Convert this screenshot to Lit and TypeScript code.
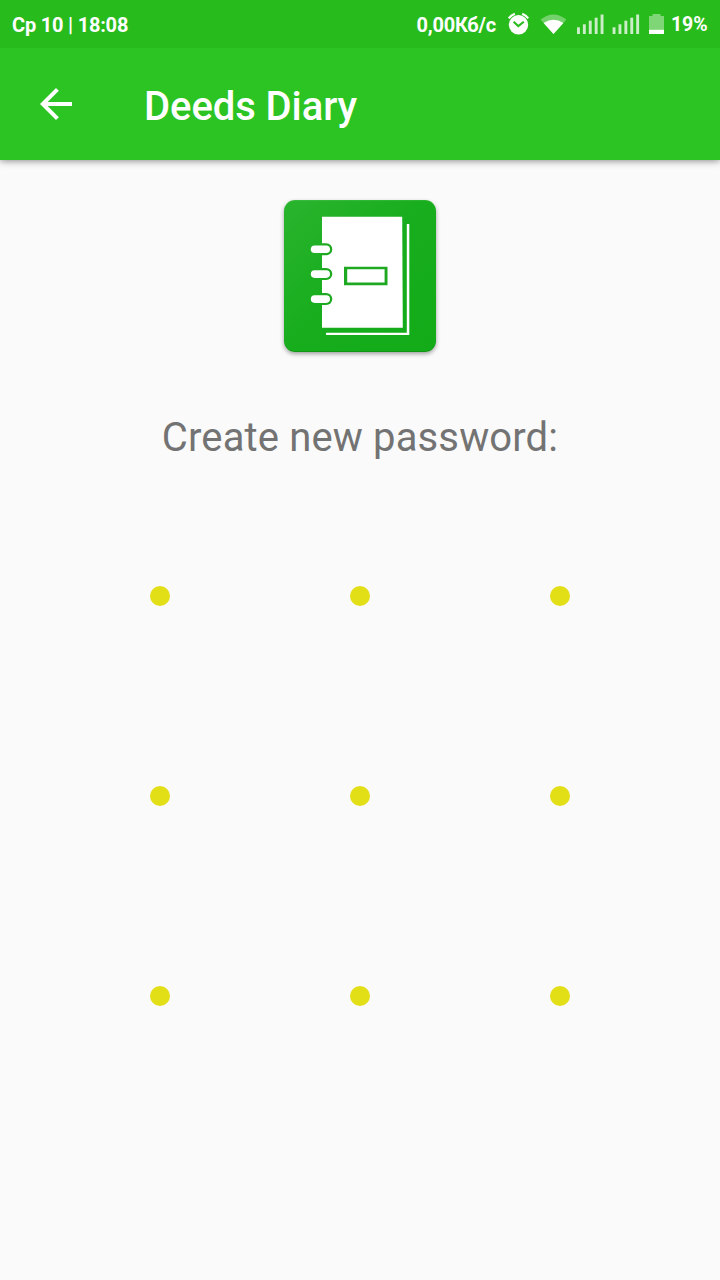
import { LitElement, html, css, svg } from "lit";
import { customElement } from "lit/decorators.js";

const green = "#1fa922";

@customElement("status-bar")
class StatusBar extends LitElement {
  static styles = css`
    :host {
      display: flex;
      align-items: center;
      height: 48px;
      box-sizing: border-box;
      padding-left: 12px;
      background: #28bb1c;
      color: #fff;
      font: 700 20px/24px Roboto, sans-serif;
      letter-spacing: -0.2px;
      white-space: pre;
    }
    .time { flex: 1; padding-top: 2px; }
    .speed { padding-top: 2px; }
    .level { width: 49px; padding-top: 2px; font-size: 19.5px; letter-spacing: -0.1px; }
    svg { display: block; flex: none; }
    .icons { display: flex; height: 48px; width: 175px; }
  `;

  bars(x: number) {
    return [27.3, 24.3, 20.7, 17.7, 14.5].map(
      (top, i) => svg`<rect x=${x + i * 5.9} y=${top} width="2.9" height=${34 - top} />`
    );
  }

  render() {
    return html`
      <span class="time">Ср 10 | 18:08</span>
      <span class="speed">0,00Кб/с</span>
      <span class="icons">
        <svg width="175" height="48" viewBox="496 0 175 48" fill="#fff">
          <circle cx="518.5" cy="24.8" r="9.7" />
          <path d="M508.8 18.4Q511 15.4 514.8 13.8M528.2 18.4Q526 15.4 522.2 13.8" fill="none" stroke="#fff" stroke-width="2.2" />
          <path d="M513.6 21.8l4.7 4.3 5.5-4.4" fill="none" stroke="#28bb1c" stroke-width="2" />
          <path d="M540.5 19.6Q553.5 9.3 566.4 19.6L553.5 34Z" opacity=".35" />
          <path d="M543.6 23Q553.5 16.4 563.4 23L553.5 34Z" />
          <g opacity=".76">${this.bars(577)}${this.bars(612.6)}</g>
          <path d="M649 16h3.5v-2h8v2h3.5v14h-15z" opacity=".4" />
          <rect x="649" y="29.8" width="15" height="4.2" />
        </svg>
      </span>
      <span class="level">19%</span>
    `;
  }
}

@customElement("diary-logo")
class DiaryLogo extends LitElement {
  static styles = css`
    :host {
      display: block;
      width: 152px;
      height: 152px;
      border-radius: 11px;
      background: linear-gradient(135deg, #2ab42e 0%, #17ad1d 50%, #13ab18 100%);
      box-shadow: 0 2px 4px rgba(0, 0, 0, 0.36), inset 0 -1px 0 rgba(0, 60, 0, 0.2),
        inset 0 1px 0 rgba(255, 255, 255, 0.08);
    }
    svg { display: block; }
  `;

  render() {
    return html`
      <svg width="152" height="152" viewBox="0 0 152 152" fill="#fff">
        <path d="M38 16.8H118.2L118.8 127.7H38Z" />
        <path d="M122.8 24h2.5v111H42v-2.3h80.8z" />
        ${[49.3, 74.1, 99.1].map(
          (y) => svg`
            <path d=${`M38 ${y - 6}h4.3a6 6 0 0 1 0 12H38z`} fill=${green} />
            <rect x="26.8" y=${y - 3.8} width="19.2" height="7.6" rx="3.8" />`
        )}
        <path d="M60 66.8h43.5v18.4H60zM63.2 69.3v13.2h37.4V69.3z" fill=${green} fill-rule="evenodd" />
      </svg>
    `;
  }
}

@customElement("app-root")
class AppRoot extends LitElement {
  static styles = css`
    :host {
      display: flex;
      flex-direction: column;
      height: 1280px;
      background: #fafafa;
      font-family: Roboto, sans-serif;
      overflow: hidden;
    }
    status-bar { position: relative; z-index: 1; flex: none; }
    header {
      display: flex;
      align-items: center;
      height: 112px;
      box-sizing: border-box;
      padding-left: 32px;
      background: #2bc423;
      box-shadow: 0 1px 7px rgba(0, 0, 0, 0.45);
      flex: none;
    }
    .back { display: block; width: 48px; height: 48px; margin-right: 64px; fill: #fff; }
    h1 { margin: 0; padding-top: 6px; color: #fff; font: 500 40px/48px Roboto, sans-serif; letter-spacing: -0.08px; }
    main { display: flex; flex-direction: column; align-items: center; padding-top: 40px; }
    p { margin: 59px 0 0; color: #737373; font: 400 40px/54px Roboto, sans-serif; letter-spacing: 0.14px; white-space: nowrap; }
    .pattern {
      display: grid;
      grid-template-columns: repeat(3, 200px);
      grid-auto-rows: 200px;
      place-items: center;
      margin-top: 31px;
    }
    .dot { width: 20px; height: 20px; border-radius: 50%; background: #e3df16; }
  `;

  render() {
    return html`
      <status-bar></status-bar>
      <header>
        <svg class="back" viewBox="0 0 24 24">
          <path d="M20 11H7.83l5.59-5.59L12 4l-8 8 8 8 1.41-1.41L7.83 13H20v-2z" />
        </svg>
        <h1>Deeds Diary</h1>
      </header>
      <main>
        <diary-logo></diary-logo>
        <p>Create new password:</p>
        <div class="pattern">${Array.from({ length: 9 }, () => html`<span class="dot"></span>`)}</div>
      </main>
    `;
  }
}
